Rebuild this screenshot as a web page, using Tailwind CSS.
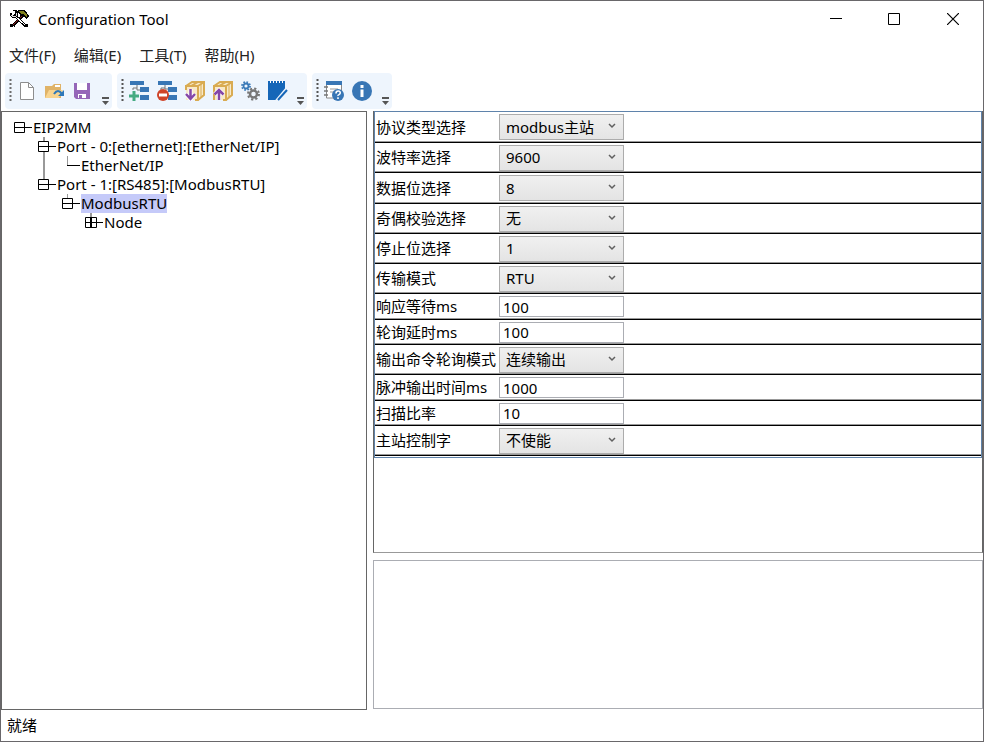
<!DOCTYPE html>
<html lang="zh-CN">
<head>
    <meta charset="UTF-8">
    <meta name="viewport" content="width=device-width, initial-scale=1.0">
    <title>Configuration Tool</title>
    <script src="https://cdn.jsdelivr.net/npm/@tailwindcss/browser@4"></script>
</head>
<body class="h-screen flex flex-col overflow-hidden border border-[#69676a] bg-white font-['Noto_Sans','Noto_Sans_CJK_SC',sans-serif] text-[15px] leading-[19px] text-black">
    <!-- Title bar -->
    <header class="flex h-[36px] shrink-0 items-center pl-2">
        <svg class="mr-2 h-5 w-5" viewBox="0 0 20 20" shape-rendering="crispEdges">
            <path d="M4 17 14 6" stroke="#000" stroke-width="3"/>
            <path d="M4 16 13 7" stroke="#8d1c1c" stroke-width="1"/>
            <path d="M5 6 17 17" stroke="#000" stroke-width="3"/>
            <path d="M6 7 16 16" stroke="#fff" stroke-width="1"/>
            <path d="M1 4h2v2h3V2h-2V1h4l1 2v3L6 9H3L1 7z" fill="#000"/>
            <path d="M2 6h2v1h3V4h1v2L6 8H3z" fill="#ddd"/>
            <path d="M7 3 10 1h5l3 3 2 3-2 3-2-1-1-3-3 1-2-3z" fill="#000"/>
            <path d="M10 2h4l4 4v2h-1l-2-3h-3z" fill="#80801a"/>
            <path d="M1 15h3v3H1zM16 15h3v3h-3z" fill="#000"/>
        </svg>
        <h1 class="ml-px flex-1">Configuration Tool</h1>
        <button type="button" aria-label="Minimize" class="flex h-full w-[58px] items-center justify-center">
            <svg class="h-3 w-3" viewBox="0 0 12 12"><path d="M0 5.5h12" stroke="#000"/></svg>
        </button>
        <button type="button" aria-label="Maximize" class="flex h-full w-[58px] items-center justify-center">
            <svg class="h-3 w-3" viewBox="0 0 12 12"><path d="M.5.5h11v11H.5z" fill="none" stroke="#000"/></svg>
        </button>
        <button type="button" aria-label="Close" class="flex h-full w-[60px] items-center justify-center">
            <svg class="h-3 w-3" viewBox="0 0 12 12"><path d="M0 0 12 12M12 0 0 12" stroke="#000" stroke-width="1.2"/></svg>
        </button>
    </header>

    <!-- Menu -->
    <nav class="flex h-[36px] shrink-0 items-center gap-[18px] pl-2 text-[#222]">
        <button type="button">文件(F)</button>
        <button type="button">编辑(E)</button>
        <button type="button">工具(T)</button>
        <button type="button">帮助(H)</button>
    </nav>

    <!-- Toolbars -->
    <div class="flex h-[38px] shrink-0 items-start gap-[5px] pl-1">
        <div role="toolbar" aria-label="File" class="flex h-9 w-[107px] items-center rounded bg-[#eef5fd] pl-1">
            <svg class="mr-[3px] h-6 w-[3px]" viewBox="0 0 3 24"><path d="M1.5 0v24" stroke="#6d6d6d" stroke-width="2" stroke-dasharray="2 2"/></svg>
            <button type="button" aria-label="New" class="mr-[3px] p-[2px]">
                <svg class="h-5 w-5" viewBox="0 0 20 20"><path d="M3.5 1.5h8l5 5v12h-13z" fill="#fff" stroke="#8e8e8e"/><path d="M11.500 1.500v5h5" fill="none" stroke="#8e8e8e"/></svg>
            </button>
            <button type="button" aria-label="Open" class="mr-1 p-[2px]">
                <svg class="h-5 w-5" viewBox="0 0 20 20"><path d="M1 5h7l2-2h7v14H1z" fill="#e0b367"/><path d="M11 4h5v2h-5z" fill="#fff"/><path d="M5 9h14l-4 8H1z" fill="#f8d48f"/><path d="M10 13q4-6 8 0" fill="none" stroke="#2f78b8" stroke-width="2"/><path d="M20 9v6h-6z" fill="#2f78b8"/></svg>
            </button>
            <button type="button" aria-label="Save" class="p-[2px]">
                <svg class="h-5 w-5" viewBox="0 0 20 20"><path d="M2 2h16v16H4l-2-2z" fill="#9566b8"/><path d="M5 2h10v7H5z" fill="#fff"/><path d="M6 13h8v4H6z" fill="#fff"/><path d="M7 14h3v3H7z" fill="#9566b8"/></svg>
            </button>
            <svg class="ml-auto mr-[2px] mt-5 h-2 w-[9px]" viewBox="0 0 9 8"><path d="M1 0h7v2H1zM1 4h7L4.500 8z" fill="#555"/></svg>
        </div>
        <div role="toolbar" aria-label="Device" class="flex h-9 w-[190px] items-center rounded bg-[#eef5fd] pl-1">
            <svg class="mr-[3px] h-6 w-[3px]" viewBox="0 0 3 24"><path d="M1.500 0v24" stroke="#555" stroke-width="2" stroke-dasharray="2 2"/></svg>
            <button type="button" aria-label="Add node" class="mr-1 p-[2px]">
                <svg class="h-5 w-5" viewBox="0 0 20 20"><path d="M1 0h14v4H1zM11 6h9v5h-9zM11 14h9v5h-9z" fill="#3876b5"/><path d="M8 4v5h3M4 9V7h4" fill="none" stroke="#777"/><path d="M5 10v10M0 15h10" stroke="#46ab83" stroke-width="3"/></svg>
            </button>
            <button type="button" aria-label="Delete node" class="mr-1 p-[2px]">
                <svg class="h-5 w-5" viewBox="0 0 20 20"><path d="M1 0h14v4H1zM11 6h9v5h-9zM11 14h9v5h-9z" fill="#3876b5"/><path d="M8 4v4h3M4 9V7h4" fill="none" stroke="#777"/><circle cx="6" cy="14" r="6" fill="#cf4429"/><path d="M2 12.500h8v3H2z" fill="#fff"/></svg>
            </button>
            <button type="button" aria-label="Download" class="mr-1 p-[2px]">
                <svg class="h-5 w-5" viewBox="0 0 20 20" fill="none"><path d="M1 5 7 1h12v13l-6 5H1z" fill="#f8e9c8"/><path d="M1 9V5h12v14h-3M1 5l6-4h12v13l-6 5M13 5l6-4M6 5l7-4" stroke="#d9ab52" stroke-width="2"/><path d="M16 3v13" stroke="#d9ab52"/><path d="M5.500 8v10M1 13l4.500 5 4.500-5" stroke="#fff" stroke-width="4"/><path d="M5.500 8v10M1 13l4.500 5 4.500-5" stroke="#8547a8" stroke-width="2.500"/></svg>
            </button>
            <button type="button" aria-label="Upload" class="mr-1 p-[2px]">
                <svg class="h-5 w-5" viewBox="0 0 20 20" fill="none"><path d="M1 5 7 1h12v13l-6 5H1z" fill="#f8e9c8"/><path d="M1 19V5h12v14h-3M1 5l6-4h12v13l-6 5M13 5l6-4M6 5l7-4" stroke="#d9ab52" stroke-width="2"/><path d="M16 3v13" stroke="#d9ab52"/><path d="M6 19V9M1.500 13.500 6 9l4.500 4.500" stroke="#fff" stroke-width="4"/><path d="M6 19V9M1.500 13.500 6 9l4.500 4.500" stroke="#8547a8" stroke-width="2.500"/></svg>
            </button>
            <button type="button" aria-label="Settings" class="mr-[3px] p-[2px]">
                <svg class="h-5 w-5" viewBox="0 0 20 20" fill="none"><circle cx="5" cy="5" r="2.500" stroke="#3b7ab8" stroke-width="1.800"/><circle cx="5" cy="5" r="4" stroke="#3b7ab8" stroke-width="1.800" stroke-dasharray="1.600 1.540"/><circle cx="12.500" cy="13" r="3.500" stroke="#777" stroke-width="2.500"/><circle cx="12.500" cy="13" r="5.500" stroke="#777" stroke-width="2" stroke-dasharray="2.200 2.120"/></svg>
            </button>
            <button type="button" aria-label="Edit" class="p-[2px]">
                <svg class="h-5 w-5" viewBox="0 0 20 20"><path d="M0 0h17v12l-6 7H0z" fill="#1566b8"/><path d="M2.500 0v2M5.500 0v2M8.500 0v2M11.500 0v2M14.500 0v2" stroke="#fff"/><path d="M9 20 19 8" stroke="#eef5fd" stroke-width="4"/><path d="m10 19 9-10" stroke="#1566b8" stroke-width="2"/></svg>
            </button>
            <svg class="ml-auto mr-[2px] mt-5 h-2 w-[9px]" viewBox="0 0 9 8"><path d="M1 0h7v2H1zM1 4h7L4.500 8z" fill="#555"/></svg>
        </div>
        <div role="toolbar" aria-label="Help" class="flex h-9 w-[80px] items-center rounded bg-[#eef5fd] pl-1">
            <svg class="mr-[3px] h-6 w-[3px]" viewBox="0 0 3 24"><path d="M1.500 0v24" stroke="#555" stroke-width="2" stroke-dasharray="2 2"/></svg>
            <button type="button" aria-label="Help" class="mr-1 p-[2px]">
                <svg class="h-5 w-5" viewBox="0 0 20 20"><path d="M2.500 1h15v16h-15z" fill="#fff" stroke="#888"/><path d="M2 0h16v4H2z" fill="#3876b5"/><path d="M0 6h4M0 10h4M0 14h4" stroke="#777" stroke-width="1.500"/><path d="M6 8h8M6 11h4" stroke="#999"/><circle cx="14" cy="14" r="6" fill="#3876b5"/><path d="M12 12.500q0-2.500 2.200-2.500t2 2q0 1-1.200 1.600t-1 1.400M14 16.200v1.800" fill="none" stroke="#fff" stroke-width="1.600"/></svg>
            </button>
            <button type="button" aria-label="About" class="p-[2px]">
                <svg class="h-5 w-5" viewBox="0 0 20 20"><circle cx="10" cy="10" r="10" fill="#3876b5"/><path d="M8.500 4h3v3h-3zM8.500 8.500h3V16h-3z" fill="#fff"/></svg>
            </button>
            <svg class="ml-auto mr-[2px] mt-5 h-2 w-[9px]" viewBox="0 0 9 8"><path d="M1 0h7v2H1zM1 4h7L4.500 8z" fill="#555"/></svg>
        </div>
    </div>

    <main class="flex min-h-0 flex-1 gap-[6px]">
        <!-- Device tree -->
        <ul role="tree" class="w-[366px] shrink-0 border border-[#666] pt-[6px]">
            <li role="treeitem" class="flex h-[19px] pl-3">
                <svg class="h-[19px] w-[19px]" viewBox="0 0 19 19" fill="none"><path d="M.5 4.500h10v10H.5zM0 9.500h18" stroke="#000"/></svg>
                <span>EIP2MM</span>
            </li>
            <li role="treeitem" class="flex h-[19px] pl-9">
                <svg class="h-[19px] w-[19px]" viewBox="0 0 19 19" fill="none"><path d="M6 0v4M6 15v4" stroke="#999" stroke-width="2"/><path d="M.5 4.500h10v10H.5zM0 9.500h18" stroke="#000"/></svg>
                <span>Port - 0:[ethernet]:[EtherNet/IP]</span>
            </li>
            <li role="treeitem" class="flex h-[19px] pl-9">
                <svg class="h-[19px] w-[43px]" viewBox="0 0 43 19" fill="none"><path d="M6 0v19" stroke="#999" stroke-width="2"/><path d="M29.500 0v9" stroke="#999"/><path d="M29 9.500h13" stroke="#000"/></svg>
                <span>EtherNet/IP</span>
            </li>
            <li role="treeitem" class="flex h-[19px] pl-9">
                <svg class="h-[19px] w-[19px]" viewBox="0 0 19 19" fill="none"><path d="M6 0v4" stroke="#999" stroke-width="2"/><path d="M.5 4.500h10v10H.5zM0 9.500h18" stroke="#000"/></svg>
                <span>Port - 1:[RS485]:[ModbusRTU]</span>
            </li>
            <li role="treeitem" aria-selected="true" class="flex h-[19px] pl-15">
                <svg class="h-[19px] w-[19px]" viewBox="0 0 19 19" fill="none"><path d="M5.500 0v4" stroke="#999"/><path d="M.5 4.500h10v10H.5zM0 9.500h18" stroke="#000"/></svg>
                <span class="bg-[#c5caf9]">ModbusRTU</span>
            </li>
            <li role="treeitem" class="flex h-[19px] pl-[83px]">
                <svg class="h-[19px] w-[19px]" viewBox="0 0 19 19" fill="none"><path d="M6 0v4" stroke="#999" stroke-width="2"/><path d="M.5 4.500h11v10H.5zM0 9.500h18" stroke="#000"/><path d="M6 4v11" stroke="#000" stroke-width="2"/></svg>
                <span>Node</span>
            </li>
        </ul>

        <div class="flex min-w-0 flex-1 flex-col gap-[7px] pb-px">
            <!-- Parameters -->
            <section class="min-h-0 flex-1 border-x border-b border-[#666] border-b-[#999]">
                <form class="border border-[#5f83ab] pb-px">
                    <div class="flex h-[31px] items-center border-b border-black shadow-[inset_0_-1px_#999]">
                        <label for="protocol" class="w-[124px] whitespace-nowrap pl-px">协议类型选择</label>
                        <div class="relative">
                            <select id="protocol" class="block h-[26px] w-[125px] appearance-none border border-[#acacac] bg-linear-to-b from-[#f0f0f0] to-[#e4e4e4] pl-[6px]"><option>modbus主站</option></select>
                            <svg class="pointer-events-none absolute right-2 top-[9px] h-[6px] w-2" viewBox="0 0 8 6"><path d="m1 1 3 3 3-3" fill="none" stroke="#606060" stroke-width="1.500"/></svg>
                        </div>
                    </div>
                    <div class="flex h-[30px] items-center border-b border-black shadow-[inset_0_-1px_#999]">
                        <label for="baud" class="w-[124px] whitespace-nowrap pl-px">波特率选择</label>
                        <div class="relative">
                            <select id="baud" class="block h-[26px] w-[125px] appearance-none border border-[#acacac] bg-linear-to-b from-[#f0f0f0] to-[#e4e4e4] pl-[6px]"><option>9600</option></select>
                            <svg class="pointer-events-none absolute right-2 top-[9px] h-[6px] w-2" viewBox="0 0 8 6"><path d="m1 1 3 3 3-3" fill="none" stroke="#606060" stroke-width="1.500"/></svg>
                        </div>
                    </div>
                    <div class="flex h-[31px] items-center border-b border-black shadow-[inset_0_-1px_#999]">
                        <label for="databits" class="w-[124px] whitespace-nowrap pl-px">数据位选择</label>
                        <div class="relative">
                            <select id="databits" class="block h-[26px] w-[125px] appearance-none border border-[#acacac] bg-linear-to-b from-[#f0f0f0] to-[#e4e4e4] pl-[6px]"><option>8</option></select>
                            <svg class="pointer-events-none absolute right-2 top-[9px] h-[6px] w-2" viewBox="0 0 8 6"><path d="m1 1 3 3 3-3" fill="none" stroke="#606060" stroke-width="1.500"/></svg>
                        </div>
                    </div>
                    <div class="flex h-[30px] items-center border-b border-black shadow-[inset_0_-1px_#999]">
                        <label for="parity" class="w-[124px] whitespace-nowrap pl-px">奇偶校验选择</label>
                        <div class="relative">
                            <select id="parity" class="block h-[26px] w-[125px] appearance-none border border-[#acacac] bg-linear-to-b from-[#f0f0f0] to-[#e4e4e4] pl-[6px]"><option>无</option></select>
                            <svg class="pointer-events-none absolute right-2 top-[9px] h-[6px] w-2" viewBox="0 0 8 6"><path d="m1 1 3 3 3-3" fill="none" stroke="#606060" stroke-width="1.500"/></svg>
                        </div>
                    </div>
                    <div class="flex h-[30px] items-center border-b border-black shadow-[inset_0_-1px_#999]">
                        <label for="stopbits" class="w-[124px] whitespace-nowrap pl-px">停止位选择</label>
                        <div class="relative">
                            <select id="stopbits" class="block h-[26px] w-[125px] appearance-none border border-[#acacac] bg-linear-to-b from-[#f0f0f0] to-[#e4e4e4] pl-[6px]"><option>1</option></select>
                            <svg class="pointer-events-none absolute right-2 top-[9px] h-[6px] w-2" viewBox="0 0 8 6"><path d="m1 1 3 3 3-3" fill="none" stroke="#606060" stroke-width="1.500"/></svg>
                        </div>
                    </div>
                    <div class="flex h-[30px] items-center border-b border-black shadow-[inset_0_-1px_#999]">
                        <label for="mode" class="w-[124px] whitespace-nowrap pl-px">传输模式</label>
                        <div class="relative">
                            <select id="mode" class="block h-[26px] w-[125px] appearance-none border border-[#acacac] bg-linear-to-b from-[#f0f0f0] to-[#e4e4e4] pl-[6px]"><option>RTU</option></select>
                            <svg class="pointer-events-none absolute right-2 top-[9px] h-[6px] w-2" viewBox="0 0 8 6"><path d="m1 1 3 3 3-3" fill="none" stroke="#606060" stroke-width="1.500"/></svg>
                        </div>
                    </div>
                    <div class="flex h-[26px] items-center border-b border-black shadow-[inset_0_-1px_#999]">
                        <label for="timeout" class="w-[124px] whitespace-nowrap pl-px">响应等待ms</label>
                        <input id="timeout" type="text" value="100" class="h-[21px] w-[125px] border border-[#abadb3] pl-[3px]">
                    </div>
                    <div class="flex h-[25px] items-center border-b border-black shadow-[inset_0_-1px_#999]">
                        <label for="delay" class="w-[124px] whitespace-nowrap pl-px">轮询延时ms</label>
                        <input id="delay" type="text" value="100" class="h-[21px] w-[125px] border border-[#abadb3] pl-[3px]">
                    </div>
                    <div class="flex h-[30px] items-center border-b border-black shadow-[inset_0_-1px_#999]">
                        <label for="output" class="w-[124px] whitespace-nowrap pl-px">输出命令轮询模式</label>
                        <div class="relative">
                            <select id="output" class="block h-[26px] w-[125px] appearance-none border border-[#acacac] bg-linear-to-b from-[#f0f0f0] to-[#e4e4e4] pl-[6px]"><option>连续输出</option></select>
                            <svg class="pointer-events-none absolute right-2 top-[9px] h-[6px] w-2" viewBox="0 0 8 6"><path d="m1 1 3 3 3-3" fill="none" stroke="#606060" stroke-width="1.500"/></svg>
                        </div>
                    </div>
                    <div class="flex h-[26px] items-center border-b border-black shadow-[inset_0_-1px_#999]">
                        <label for="pulse" class="w-[124px] whitespace-nowrap pl-px">脉冲输出时间ms</label>
                        <input id="pulse" type="text" value="1000" class="h-[21px] w-[125px] border border-[#abadb3] pl-[3px]">
                    </div>
                    <div class="flex h-[25px] items-center border-b border-black shadow-[inset_0_-1px_#999]">
                        <label for="scan" class="w-[124px] whitespace-nowrap pl-px">扫描比率</label>
                        <input id="scan" type="text" value="10" class="h-[21px] w-[125px] border border-[#abadb3] pl-[3px]">
                    </div>
                    <div class="flex h-[30px] items-center border-b border-black shadow-[inset_0_-1px_#999]">
                        <label for="control" class="w-[124px] whitespace-nowrap pl-px">主站控制字</label>
                        <div class="relative">
                            <select id="control" class="block h-[26px] w-[125px] appearance-none border border-[#acacac] bg-linear-to-b from-[#f0f0f0] to-[#e4e4e4] pl-[6px]"><option>不使能</option></select>
                            <svg class="pointer-events-none absolute right-2 top-[9px] h-[6px] w-2" viewBox="0 0 8 6"><path d="m1 1 3 3 3-3" fill="none" stroke="#606060" stroke-width="1.500"/></svg>
                        </div>
                    </div>
                </form>
            </section>
            <!-- Output -->
            <section class="h-[149px] shrink-0 border border-[#abadb3]"></section>
        </div>
    </main>

    <footer class="flex h-[31px] shrink-0 items-center pl-[6px]">就绪</footer>
</body>
</html>
